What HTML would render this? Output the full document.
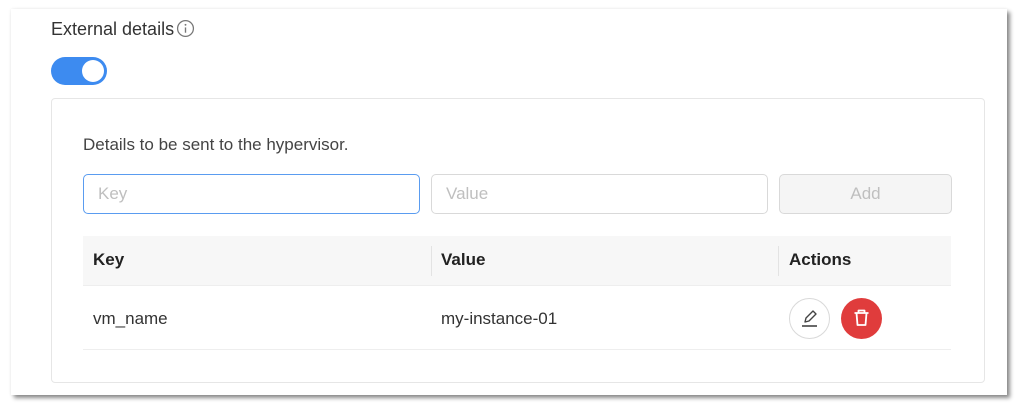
<!DOCTYPE html>
<html><head><style>
body{margin:0;width:1024px;height:411px;background:#fff;font-family:"Liberation Sans",sans-serif;position:relative;overflow:hidden}
.card{position:absolute;left:11px;top:9px;width:996px;height:386px;background:#fff;box-shadow:3px 3px 4px rgba(0,0,0,.45),0 0 3px rgba(0,0,0,.08)}
.a{position:absolute}
.title{left:51px;top:19px;font-size:18px;color:#333}
.tog{left:51px;top:57px;width:56px;height:28px;border-radius:14px;background:#3d8bf0}
.knob{position:absolute;right:3px;top:3px;width:22px;height:22px;border-radius:50%;background:#fff}
.inner{left:51px;top:98px;width:932px;height:283px;border:1px solid #e6e6e6;border-radius:4px}
.inp{top:174px;border:1px solid #d9d9d9;border-radius:5px;box-sizing:border-box;height:40px;font-size:17px;color:#bfbfbf;padding:9px 14px}
.th{left:83px;top:236px;width:868px;height:49px;background:#f7f7f7;border-bottom:1px solid #eee}
.hd{font-size:17px;font-weight:bold;color:#222;top:250px}
.sep{top:246px;width:1px;height:30px;background:#e3e3e3}
.td{font-size:17px;color:#333;top:309px}
.btn{width:41px;height:41px;border-radius:50%;box-sizing:border-box;top:298px}
</style></head><body>
<div class="card"></div>
<div class="a title">External details<svg style="vertical-align:-3px;margin-left:2px" width="19" height="19" viewBox="0 0 18 18"><circle cx="9" cy="9" r="7.5" fill="none" stroke="#777" stroke-width="1.2"/><circle cx="9" cy="5.5" r="0.9" fill="#777"/><path d="M9 8v5" stroke="#777" stroke-width="1.3"/></svg></div>
<div class="a tog"><div class="knob"></div></div>
<div class="a inner"></div>
<div class="a" style="left:83px;top:135px;font-size:17px;color:#444">Details to be sent to the hypervisor.</div>
<div class="a inp" style="left:83px;width:337px;border-color:#5a9cf0">Key</div>
<div class="a inp" style="left:431px;width:337px">Value</div>
<div class="a inp" style="left:779px;width:173px;background:#f5f5f5;text-align:center">Add</div>
<div class="a th"></div>
<div class="a sep" style="left:431px"></div>
<div class="a sep" style="left:778px"></div>
<div class="a hd" style="left:93px">Key</div>
<div class="a hd" style="left:441px">Value</div>
<div class="a hd" style="left:789px">Actions</div>
<div class="a" style="left:83px;top:349px;width:868px;height:1px;background:#eee"></div>
<div class="a td" style="left:93px">vm_name</div>
<div class="a td" style="left:441px">my-instance-01</div>
<div class="a btn" style="left:789px;border:1px solid #d9d9d9;background:#fff"><svg width="39" height="39" viewBox="0 0 39 39"><path d="M15 23l1-4 7-7 3 3-7 7z" fill="none" stroke="#444" stroke-width="1.4" stroke-linejoin="round"/><path d="M12 27h15" stroke="#444" stroke-width="1.6"/></svg></div>
<div class="a btn" style="left:841px;background:#e03c3c"><svg width="41" height="41" viewBox="0 0 41 41"><path d="M13.5 15h14M17.5 15v-2.5h6v2.5M15.5 15l1 12h8l1-12" fill="none" stroke="#fff" stroke-width="1.8" stroke-linejoin="round"/></svg></div>
</body></html>
